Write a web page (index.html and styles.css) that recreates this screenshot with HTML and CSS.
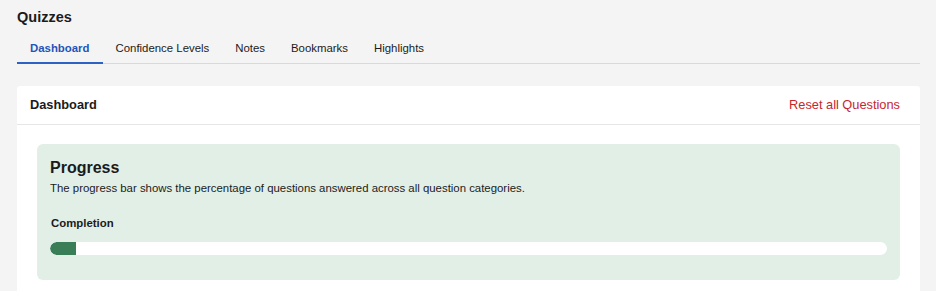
FILE: index.html
```html
<!DOCTYPE html>
<html lang="en">
<head>
    <meta charset="UTF-8">
    <meta name="viewport" content="width=device-width, initial-scale=1.0">
    <link rel="stylesheet" href="styles.css">
    <title>Quizzes</title>
</head>
<body>
    <h1 class="page-title">Quizzes</h1>

    <nav class="tabs">
        <a href="#" class="tab active">Dashboard</a>
        <a href="#" class="tab">Confidence Levels</a>
        <a href="#" class="tab">Notes</a>
        <a href="#" class="tab">Bookmarks</a>
        <a href="#" class="tab">Highlights</a>
    </nav>

    <div class="card">
        <div class="card-header">
            <h2 class="card-title">Dashboard</h2>
            <a href="#" class="reset-link">Reset all Questions</a>
        </div>
        <div class="card-body">
            <div class="progress-box">
                <h3 class="progress-title">Progress</h3>
                <p class="progress-desc">The progress bar shows the percentage of questions answered across all question categories.</p>
                <p class="progress-label">Completion</p>
                <div class="progress-track">
                    <div class="progress-fill" style="width: 26px;"></div>
                </div>
            </div>
        </div>
    </div>
</body>
</html>
```

FILE: styles.css
```css
body {
    margin: 0;
    padding: 8px 16px 0 17px;
    background-color: #f4f4f4; /* 页面背景 */
    font-family: "Liberation Sans", Arial, sans-serif;
    color: #1b1b1b;
}
.page-title {
    margin: 0;
    font-size: 14.5px;
    line-height: 18px;
    font-weight: bold;
}

/* 选项卡 */
.tabs {
    display: flex;
    margin-top: 8px;
    border-bottom: 1px solid #d9d9d9;
}
.tab {
    padding: 7px 13px 7px;
    margin-bottom: -1px;
    font-size: 11.4px;
    line-height: 14px;
    color: #1b1b1b;
    text-decoration: none;
    border-bottom: 2px solid transparent;
}
.tab.active {
    color: #1f55b9;
    font-weight: bold;
    border-bottom-color: #2b62c4;
}

/* 卡片 */
.card {
    margin-top: 22px;
    background-color: #fff;
    border-radius: 3px;
}
.card-header {
    display: flex;
    justify-content: space-between;
    align-items: center;
    padding: 11px 20px 11px 13px;
    border-bottom: 1px solid #e6e6e6;
}
.card-title {
    margin: 0;
    font-size: 12.8px;
    line-height: 16px;
    font-weight: bold;
}
.reset-link {
    font-size: 12.8px;
    line-height: 16px;
    color: #c8262d;
    text-decoration: none;
}
.card-body {
    padding: 19px 20px 20px;
}

/* 进度 */
.progress-box {
    padding: 14px 13px 25px;
    background-color: #e2efe7;
    border-radius: 6px;
}
.progress-title {
    margin: 0;
    font-size: 16px;
    line-height: 20px;
    font-weight: bold;
}
.progress-desc {
    margin: 3px 0 0;
    font-size: 11.4px;
    line-height: 14px;
}
.progress-label {
    margin: 21px 0 0 1px;
    font-size: 11.4px;
    line-height: 14px;
    font-weight: bold;
}
.progress-track {
    margin-top: 12px;
    height: 13px;
    background-color: #fff;
    border-radius: 7px;
    overflow: hidden;
}
.progress-fill {
    height: 100%;
    background-color: #3a7e58;
    border-radius: 7px 0 0 7px;
}
```
